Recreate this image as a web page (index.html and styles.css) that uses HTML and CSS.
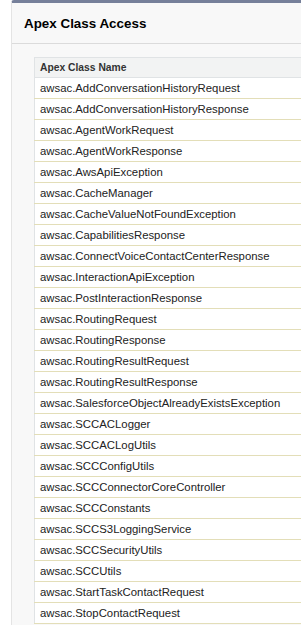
FILE: index.html
```html
<!DOCTYPE html>
<html>
<head>
<meta charset="utf-8">
<link rel="stylesheet" href="styles.css">
</head>
<body>
<div class="panel">
  <div class="panel-header"><h3 class="title">Apex Class Access</h3></div>
  <div class="panel-body">
    <table class="list">
      <thead><tr><th>Apex Class Name</th></tr></thead>
      <tbody>
        <tr><td>awsac.AddConversationHistoryRequest</td></tr>
        <tr><td>awsac.AddConversationHistoryResponse</td></tr>
        <tr><td>awsac.AgentWorkRequest</td></tr>
        <tr><td>awsac.AgentWorkResponse</td></tr>
        <tr><td>awsac.AwsApiException</td></tr>
        <tr><td>awsac.CacheManager</td></tr>
        <tr><td>awsac.CacheValueNotFoundException</td></tr>
        <tr><td>awsac.CapabilitiesResponse</td></tr>
        <tr><td>awsac.ConnectVoiceContactCenterResponse</td></tr>
        <tr><td>awsac.InteractionApiException</td></tr>
        <tr><td>awsac.PostInteractionResponse</td></tr>
        <tr><td>awsac.RoutingRequest</td></tr>
        <tr><td>awsac.RoutingResponse</td></tr>
        <tr><td>awsac.RoutingResultRequest</td></tr>
        <tr><td>awsac.RoutingResultResponse</td></tr>
        <tr><td>awsac.SalesforceObjectAlreadyExistsException</td></tr>
        <tr><td>awsac.SCCACLogger</td></tr>
        <tr><td>awsac.SCCACLogUtils</td></tr>
        <tr><td>awsac.SCCConfigUtils</td></tr>
        <tr><td>awsac.SCCConnectorCoreController</td></tr>
        <tr><td>awsac.SCCConstants</td></tr>
        <tr><td>awsac.SCCS3LoggingService</td></tr>
        <tr><td>awsac.SCCSecurityUtils</td></tr>
        <tr><td>awsac.SCCUtils</td></tr>
        <tr><td>awsac.StartTaskContactRequest</td></tr>
        <tr><td>awsac.StopContactRequest</td></tr>
      </tbody>
    </table>
  </div>
</div>
</body>
</html>
```
FILE: styles.css
```css
html, body {
  margin: 0;
  padding: 0;
  background: #ffffff;
  font-family: "Liberation Sans", Arial, sans-serif;
  color: #222;
}
.panel {
  margin-left: 11px;
  min-height: 625px;
  background: #f8f8f8;
  border-top: 3px solid #76809a;
  border-left: 1px solid #e4e4e4;
  border-top-left-radius: 3px;
}
.panel-header {
  height: 40px;
  border-bottom: 1px solid #dbdbdb;
  display: flex;
  align-items: center;
  padding-left: 12px;
}
.title {
  margin: 0;
  font-size: 13.4px;
  font-weight: bold;
  color: #000;
}
.panel-body {
  padding: 13px 0 0 22px;
}
.list {
  border-collapse: collapse;
  width: 100%;
  background: #fff;
  border-left: 1px solid #e0e3e5;
  border-top: 1px solid #e0e3e5;
}
.list th {
  background: #f2f3f3;
  text-align: left;
  font-size: 10.3px;
  font-weight: bold;
  color: #333;
  height: 19px;
  padding: 0 0 0 5px;
  border-bottom: 1px solid #e0e3e5;
}
.list td {
  font-size: 11.35px;
  color: #222;
  height: 20px;
  padding: 0 0 0 5px;
  border-bottom: 1px solid #e3deb8;
  white-space: nowrap;
}
```
